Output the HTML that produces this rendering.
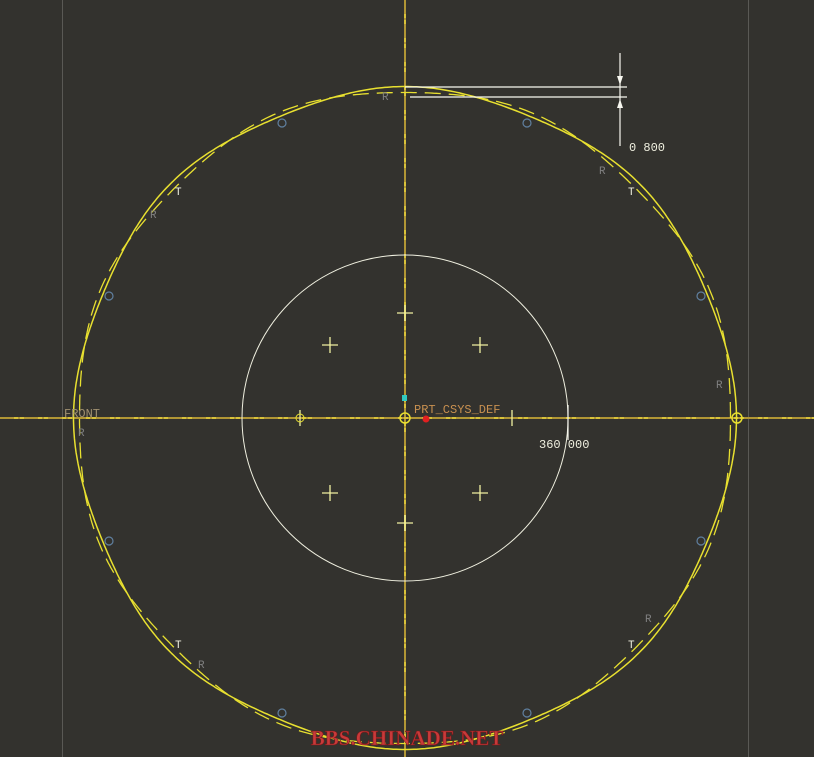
<!DOCTYPE html>
<html><head><style>
html,body{margin:0;padding:0;background:#33322e;width:814px;height:757px;overflow:hidden}
svg{display:block}
text{font-family:"Liberation Mono",monospace}
</style></head><body>
<svg id="s" width="814" height="757" viewBox="0 0 814 757">
<rect width="814" height="757" fill="#33322e"/>
<line x1="62.5" y1="0" x2="62.5" y2="757" stroke="#5a5955" stroke-width="1"/>
<line x1="748.5" y1="0" x2="748.5" y2="757" stroke="#5a5955" stroke-width="1"/>
<line x1="405" y1="0" x2="405" y2="757" stroke="#d8c23a" stroke-width="2"/>
<line x1="405" y1="0" x2="405" y2="757" stroke="#8a6a30" stroke-width="1" stroke-dasharray="14 4 2 4"/>
<line x1="0" y1="418" x2="814" y2="418" stroke="#d8c23a" stroke-width="2"/>
<line x1="0" y1="418" x2="814" y2="418" stroke="#8a6a30" stroke-width="1" stroke-dasharray="14 4 2 4"/>
<circle cx="405" cy="418" r="163" fill="none" stroke="#f0f0e0" stroke-width="1"/>
<path id="p1" fill="none" stroke="#e8e030" stroke-width="1.5"/>
<path id="p2" fill="none" stroke="#e8e030" stroke-width="1.3" stroke-dasharray="16 8"/>
<g stroke="#f0f0a0" stroke-width="1.3">
<path d="M397 313h16M405 305v16M397 523h16M405 515v16M322 345h16M330 337v16M472 345h16M480 337v16M322 493h16M330 485v16M472 493h16M480 485v16"/>
<path d="M300 410v16M512 410v16"/>
</g>
<circle cx="300" cy="418" r="4" fill="none" stroke="#e8e030"/>
<circle cx="405" cy="418" r="5" fill="none" stroke="#e8e030" stroke-width="1.5"/>
<circle cx="737" cy="418" r="5" fill="none" stroke="#e8e030" stroke-width="1.5"/>
<rect x="402" y="395" width="5" height="6" fill="#30c8c0"/>
<circle cx="426" cy="419" r="3.5" fill="#e02020"/>
<g fill="none" stroke="#6080a0" stroke-width="1.2">
<circle cx="282" cy="123" r="4"/><circle cx="527" cy="123" r="4"/>
<circle cx="109" cy="296" r="4"/><circle cx="701" cy="296" r="4"/>
<circle cx="109" cy="541" r="4"/><circle cx="701" cy="541" r="4"/>
<circle cx="282" cy="713" r="4"/><circle cx="527" cy="713" r="4"/>
</g>
<g stroke="#f8f8f0" stroke-width="1.2">
<line x1="405" y1="87" x2="627" y2="87"/>
<line x1="410" y1="97" x2="627" y2="97"/>
<line x1="620" y1="53" x2="620" y2="146"/>
<line x1="568" y1="405" x2="568" y2="440"/>
</g>
<path d="M617 76l3 9 3-9zM617 108l3-9 3 9z" fill="#f8f8f0"/>
<text x="629" y="151" fill="#f0f0e0" font-size="12">0 800</text>
<text x="539" y="448" fill="#f0f0e0" font-size="12">360 000</text>
<text x="414" y="413" fill="#c89050" font-size="12">PRT_CSYS_DEF</text>
<text x="64" y="417" fill="#a09070" font-size="12">FRONT</text>
<g fill="#808080" font-size="11">
<text x="382" y="100">R</text><text x="599" y="174">R</text><text x="150" y="218">R</text>
<text x="716" y="388">R</text><text x="78" y="436">R</text><text x="645" y="622">R</text><text x="198" y="668">R</text>
</g>
<g fill="#f0f0e0" font-size="11">
<text x="175" y="195">T</text><text x="628" y="195">T</text><text x="175" y="648">T</text><text x="628" y="648">T</text>
</g>
<text x="407" y="745" text-anchor="middle" fill="#c83a3a" stroke="#7a1818" stroke-width="0.6" style="font-family:'Liberation Serif',serif" font-size="21" font-weight="bold">BBS.CHINADE.NET</text>
</svg>
<script>
function mk(f){var d="";for(var i=0;i<=720;i++){var t=i/720*2*Math.PI;var r=f(t);var x=405+r*Math.cos(t),y=418-r*Math.sin(t);d+=(i?"L":"M")+x.toFixed(1)+" "+y.toFixed(1);}return d+"Z";}
document.getElementById("p1").setAttribute("d",mk(function(t){return 329+2.5*Math.cos(8*t);}));
document.getElementById("p2").setAttribute("d",mk(function(t){return 328-2.5*Math.cos(8*t);}));
</script>
</body></html>
